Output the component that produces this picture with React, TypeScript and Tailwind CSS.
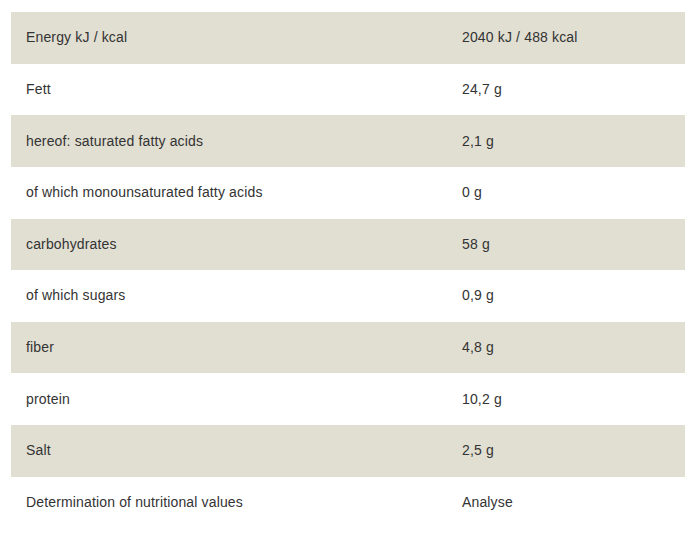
const ROWS: [string, string][] = [
  ['Energy kJ / kcal', '2040 kJ / 488 kcal'],
  ['Fett', '24,7 g'],
  ['hereof: saturated fatty acids', '2,1 g'],
  ['of which monounsaturated fatty acids', '0 g'],
  ['carbohydrates', '58 g'],
  ['of which sugars', '0,9 g'],
  ['fiber', '4,8 g'],
  ['protein', '10,2 g'],
  ['Salt', '2,5 g'],
  ['Determination of nutritional values', 'Analyse'],
];

export default function App() {
  return (
    <div className="bg-white w-[697px] h-[544px] pt-[12px] pl-[11px]" style={{ fontFamily: '"Liberation Sans", Arial, sans-serif' }}>
      <table className="w-[674px] border-collapse text-[14px] tracking-[0.15px] text-[#333]">
        <tbody>
          {ROWS.map(([label, value], i) => (
            <tr key={label} className={i % 2 === 0 ? 'bg-[#e1dfd2]' : 'bg-white'}>
              <td className="w-[436px] h-[51.63px] px-[15px] py-0 align-middle">{label}</td>
              <td className="h-[51.63px] px-[15px] py-0 align-middle">{value}</td>
            </tr>
          ))}
        </tbody>
      </table>
    </div>
  );
}
